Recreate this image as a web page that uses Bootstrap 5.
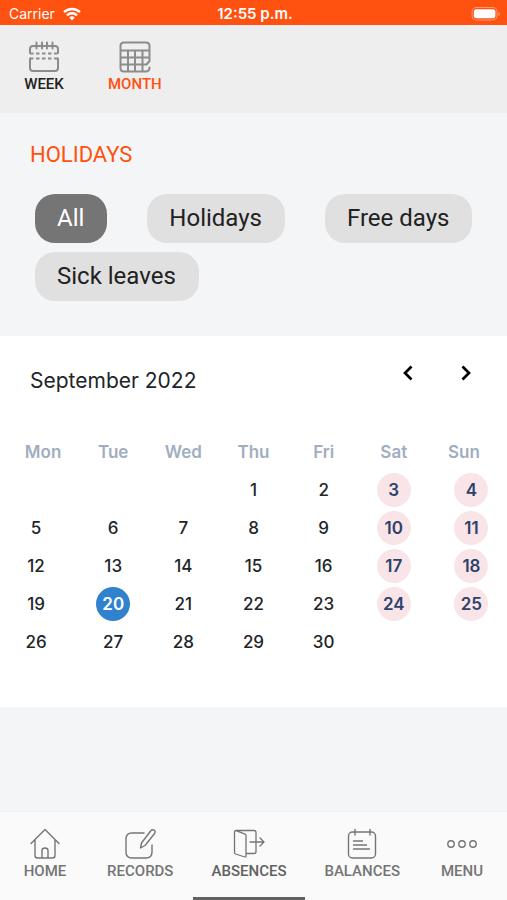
<!DOCTYPE html>
<html lang="en">
<head>
<meta charset="utf-8">
<meta name="viewport" content="width=device-width, initial-scale=1">
<title>Absences</title>
<link href="https://cdn.jsdelivr.net/npm/bootstrap@5.3.0/dist/css/bootstrap.min.css" rel="stylesheet">
<style>
  body { font-family: Roboto, sans-serif; background: #f3f5f7; color: #212121; }
  svg { display: block; fill: none; stroke: currentColor; stroke-linecap: round; stroke-linejoin: round; }
  .status-bar { background: #ff5110; color: #fff; height: 25px; padding: 2px 6px 0 9px; font: 14px/24px Inter, sans-serif; }
  .status-side { flex: 1 1 0; }
  .status-time { font-size: 15px; font-weight: 600; }
  .view-bar { background: #eee; height: 88px; }
  .tab-btn { min-width: 86px; padding: 0 20px; border: 0; background: none; color: #757575; font-size: 15px; font-weight: 500; line-height: 20px; text-decoration: none; }
  .view-bar .tab-btn { min-width: 88px; padding-top: 16px; color: #212121; }
  .view-bar .tab-btn.active { color: #ff5110; }
  .view-bar svg { color: #8c8c8c; margin-bottom: 1px; }
  .filters { padding: 27px 30px 35px; }
  .filters h1 { font-size: 22px; line-height: 30px; color: #ff5110; font-weight: 400; margin-bottom: 24px; }
  .chip-list { gap: 10px 40px; padding-left: 5px; margin-right: -10px; }
  .chip { height: 49px; padding: 0 23px 0 22px; border: 0; border-radius: 20px; background: #e0e0e0; color: #212121; font-size: 24px; line-height: 49px; }
  .chip-list { row-gap: 9px; }
  .chip.active { background: #757575; color: #fff; }
  .calendar { font-family: Inter, sans-serif; padding: 20px 8px 46px; color: #212529; }
  .calendar-head { padding: 0 16px 0 22px; margin-bottom: 37px; }
  .calendar-head h2 { font-size: 21px; line-height: 30px; font-weight: 400; margin: 10px 0 0; }
  .step-btn { width: 34px; height: 34px; border: 0; background: none; color: #000; padding: 0; }
  .days { width: 100%; table-layout: fixed; text-align: center; font-size: 17px; line-height: 26px; font-weight: 500; }
  .days th { height: 38px; padding: 0; color: #a0aec0; font-weight: 600; }
  .days td { height: 38px; padding: 0; }
  .days td:first-child { padding-right: 14px; }
  .days td:last-child { padding-left: 15px; }
  .day-dot { display: block; width: 34px; height: 34px; margin: 0 auto; border-radius: 50%; line-height: 34px; font-weight: 600; background: #f9e5e7; color: #2c426b; }
  .day-dot.today { background: #3182ce; color: #fff; }
  .bottom-bar { background: #fafafa; border-top: 1px solid #eef0f1; padding: 0 2px; height: 89px; }
  .bottom-bar .tab-btn { padding-top: 16px; border-bottom: 3px solid transparent; }
  .bottom-bar .tab-btn.active { color: #616161; border-color: #616161; }
  .bottom-bar svg { color: #757575; margin-bottom: 1px; }
</style>
<script src="https://cdn.jsdelivr.net/npm/bootstrap@5.3.0/dist/js/bootstrap.bundle.min.js"></script>
</head>
<body class="d-flex flex-column min-vh-100">
<div class="status-bar d-flex align-items-center">
  <div class="status-side d-flex align-items-center gap-2">
    <span>Carrier</span>
    <svg width="18" height="14" viewBox="0 0 18 14" stroke="none" stroke-width="2.5" aria-hidden="true"><path stroke="#fff" stroke-linecap="butt" d="M1 5.2a11.5 11.5 0 0 1 16 0M4 8.3a7.2 7.2 0 0 1 10 0"/><path fill="#fff" stroke="none" d="M6.3 10.6a4 4 0 0 1 5.4 0L9 13.5z"/></svg>
  </div>
  <span class="status-time">12:55 p.m.</span>
  <div class="status-side d-flex justify-content-end">
    <svg width="30" height="14" viewBox="0 0 30 14" aria-hidden="true"><rect x="1" y=".5" width="25" height="12.5" rx="4" stroke="#ff9a70"/><rect x="2.8" y="2.3" width="21.6" height="9" rx="2.5" fill="#fff" stroke="none"/><path d="M27.5 5v4q1.6-.6 1.6-2t-1.6-2" fill="#ff9a70" stroke="none"/></svg>
  </div>
</div>
<div class="view-bar d-flex">
  <button class="tab-btn d-flex flex-column align-items-center" type="button">
    <svg width="32" height="32" viewBox="0 0 32 32" stroke-width="2" aria-hidden="true"><path d="M2 12V8q0-3 3-3h22q3 0 3 3v4M2 17.500V27q0 3 3 3h22q3 0 3-3v-9.500M8.500 1.500v6M14 1.500v6M19 1.500v6M24.500 1.500v6"/><path stroke-linecap="butt" stroke-dasharray="3.500 2.500" d="M2 12.500h28M2 17.500h28"/></svg>
    WEEK
  </button>
  <button class="tab-btn active d-flex flex-column align-items-center" type="button">
    <svg width="32" height="32" viewBox="0 0 32 32" stroke-width="2" aria-hidden="true"><path d="M30.500 20V5q0-3.500-3.500-3.500H5Q1.500 1.500 1.500 5v22q0 3.500 3.500 3.500h21.500q4 0 4-4M1.500 9.500h29M1.500 16.500h29M1.500 23.500h25M9 9.500v21M16 9.500v21M23.500 9.500v21M30.500 20l-3 3.500"/></svg>
    MONTH
  </button>
</div>
<main class="flex-grow-1">
  <section class="filters">
    <h1>HOLIDAYS</h1>
    <div class="chip-list d-flex flex-wrap">
      <button class="chip active" type="button">All</button>
      <button class="chip" type="button">Holidays</button>
      <button class="chip" type="button">Free days</button>
      <button class="chip" type="button">Sick leaves</button>
    </div>
  </section>
  <section class="calendar bg-white">
    <div class="calendar-head d-flex justify-content-between align-items-start">
      <h2>September 2022</h2>
      <div class="d-flex gap-4">
        <button class="step-btn d-flex align-items-center justify-content-center" type="button" aria-label="Previous month"><svg width="12" height="16" viewBox="0 0 12 16" stroke-width="2.700"><path stroke-linecap="butt" stroke-linejoin="miter" d="M9.500 1.500L3 8l6.500 6.500"/></svg></button>
        <button class="step-btn d-flex align-items-center justify-content-center" type="button" aria-label="Next month"><svg width="12" height="16" viewBox="0 0 12 16" stroke-width="2.700"><path stroke-linecap="butt" stroke-linejoin="miter" d="M2.500 1.500L9 8l-6.500 6.500"/></svg></button>
      </div>
    </div>
    <table class="days">
      <thead><tr><th>Mon</th><th>Tue</th><th>Wed</th><th>Thu</th><th>Fri</th><th>Sat</th><th>Sun</th></tr></thead>
      <tbody>
        <tr><td></td><td></td><td></td><td>1</td><td>2</td><td><span class="day-dot">3</span></td><td><span class="day-dot">4</span></td></tr>
        <tr><td>5</td><td>6</td><td>7</td><td>8</td><td>9</td><td><span class="day-dot">10</span></td><td><span class="day-dot">11</span></td></tr>
        <tr><td>12</td><td>13</td><td>14</td><td>15</td><td>16</td><td><span class="day-dot">17</span></td><td><span class="day-dot">18</span></td></tr>
        <tr><td>19</td><td><span class="day-dot today">20</span></td><td>21</td><td>22</td><td>23</td><td><span class="day-dot">24</span></td><td><span class="day-dot">25</span></td></tr>
        <tr><td>26</td><td>27</td><td>28</td><td>29</td><td>30</td><td></td><td></td></tr>
      </tbody>
    </table>
  </section>
</main>
<nav class="bottom-bar d-flex" aria-label="Main">
  <a href="#" class="tab-btn flex-grow-1 d-flex flex-column align-items-center">
    <svg width="32" height="32" viewBox="0 0 32 32" stroke-width="1.400" aria-hidden="true"><path d="M2 15.500L16 1.500l14 14M6 12v15.500q0 2.500 2.500 2.500h15q2.500 0 2.500-2.500V12M13 29.500v-7q0-2.500 3-2.500t3 2.500v7"/></svg>
    HOME
  </a>
  <a href="#" class="tab-btn flex-grow-1 d-flex flex-column align-items-center">
    <svg width="32" height="32" viewBox="0 0 32 32" stroke-width="1.400" aria-hidden="true"><path d="M20 5H8q-6 0-6 6v13q0 6 6 6h14q6 0 6-6v-7M16.500 20l1-5L27 2.500q1.500-1.500 3.300-.3 1.500 1.300.3 3.300L21 17.500z"/></svg>
    RECORDS
  </a>
  <a href="#" class="tab-btn active flex-grow-1 d-flex flex-column align-items-center" aria-current="page">
    <svg width="32" height="32" viewBox="0 0 32 32" stroke-width="1.300" aria-hidden="true"><path d="M14 25.500h7q2 0 2-2V4.500q0-2-2-2H3q-1.500 0-1.500 1.500v20.500q0 1 1 1.500L12 29q1 .300 1-1V7.500q0-1-1-1.300L3 2.700M17 14h14M27 10l4 4-4 4"/></svg>
    ABSENCES
  </a>
  <a href="#" class="tab-btn flex-grow-1 d-flex flex-column align-items-center">
    <svg width="32" height="32" viewBox="0 0 32 32" stroke-width="1.400" aria-hidden="true"><rect x="2.500" y="4" width="27" height="26" rx="4"/><path d="M9 1.500v5.500M24 1.500v5.500M7.500 13h9M7.500 17h13M7.500 21h16"/></svg>
    BALANCES
  </a>
  <a href="#" class="tab-btn flex-grow-1 d-flex flex-column align-items-center">
    <svg width="32" height="32" viewBox="0 0 32 32" stroke-width="1.400" aria-hidden="true"><circle cx="5" cy="16" r="3.200"/><circle cx="16" cy="16" r="3.200"/><circle cx="27" cy="16" r="3.200"/></svg>
    MENU
  </a>
</nav>
</body>
</html>
